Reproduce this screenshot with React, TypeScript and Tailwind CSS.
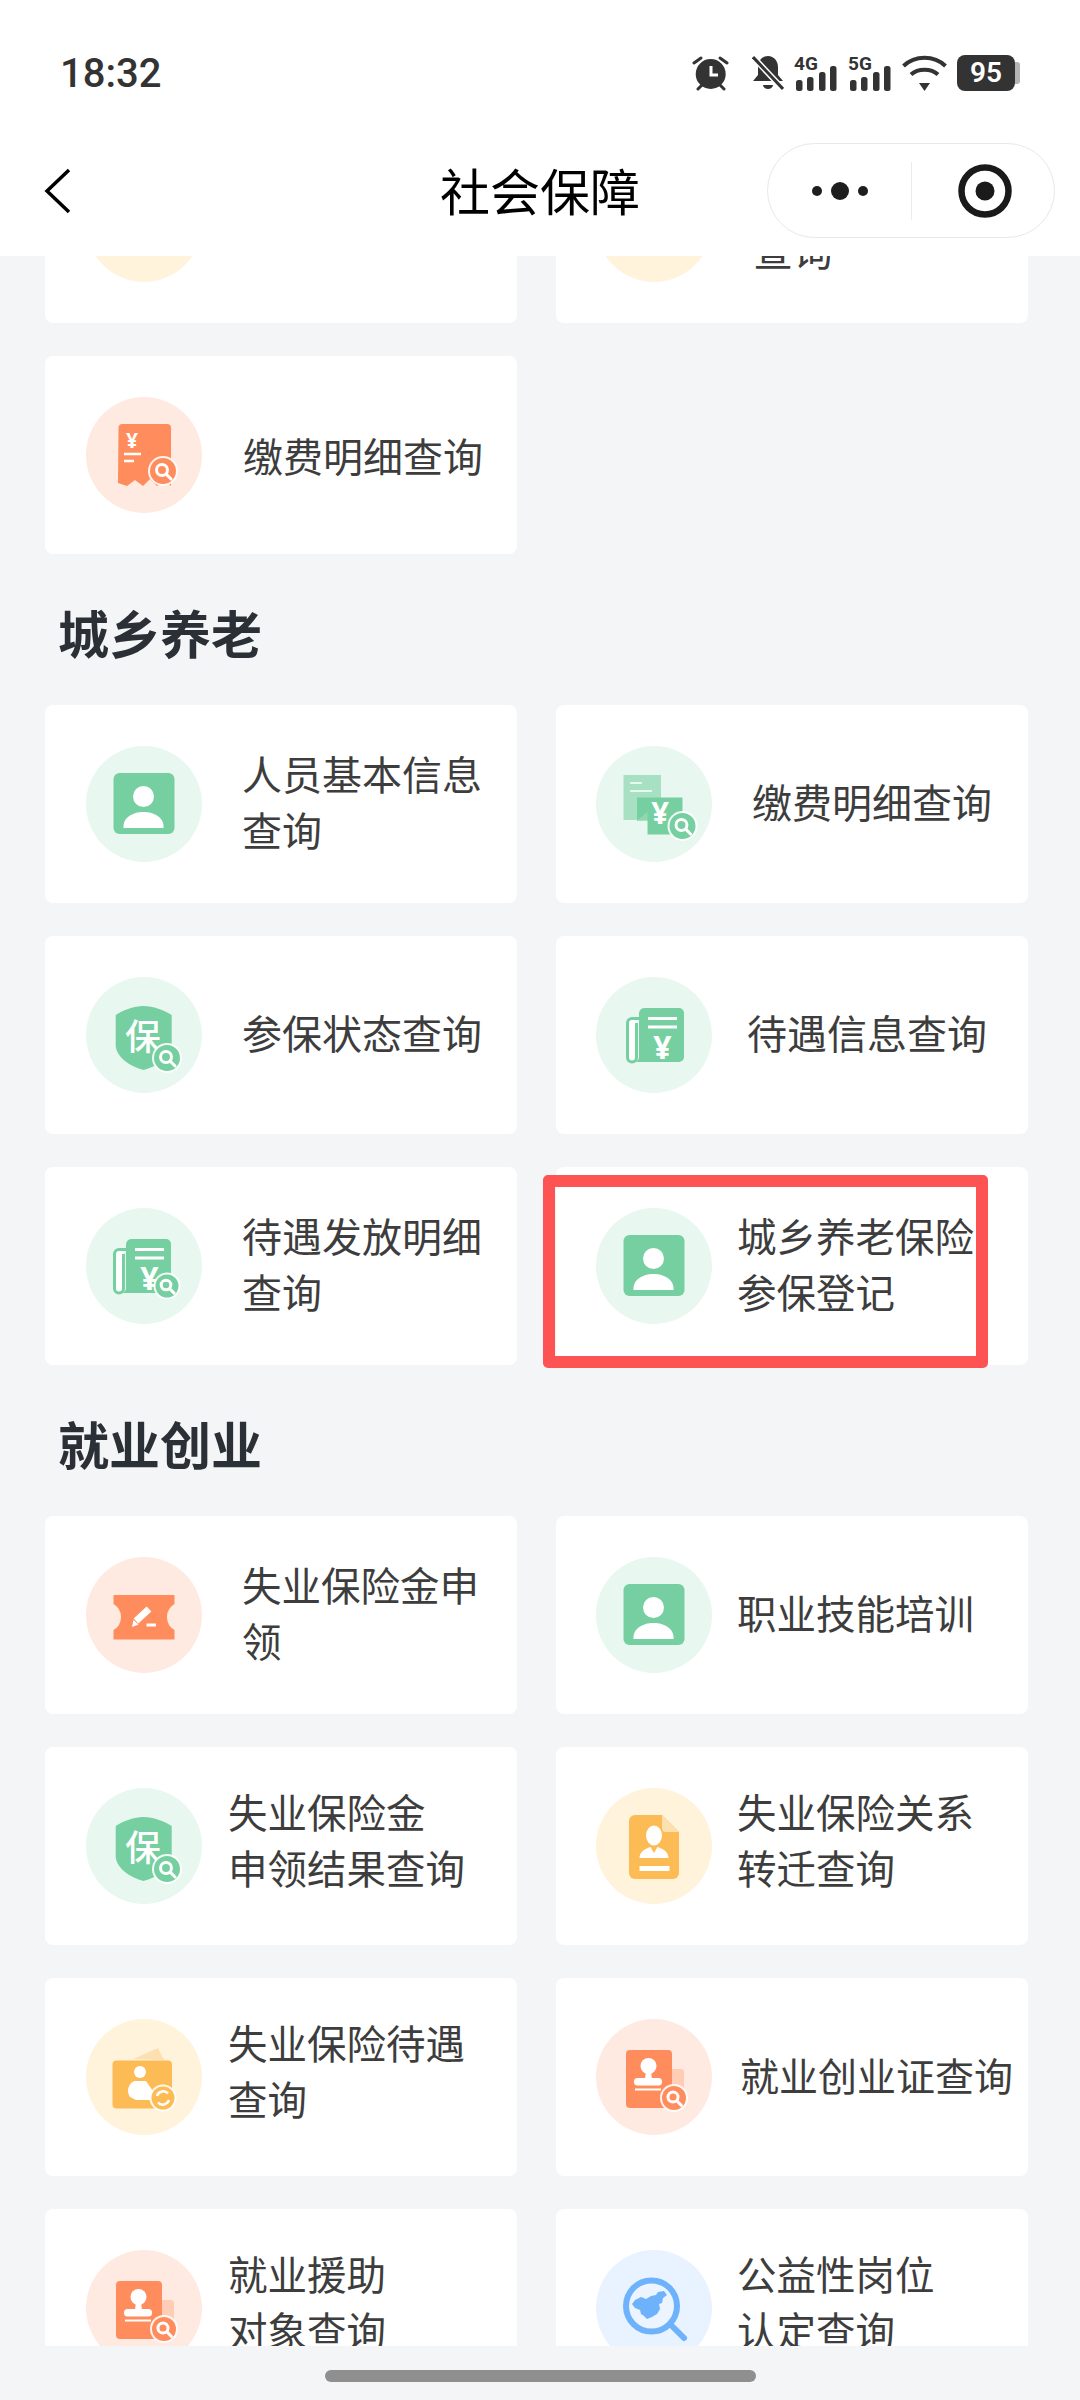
import React from 'react';

const GREEN = '#76cfa0';
const ORANGE = '#ff8c5c';
const YELLOW = '#fdbb55';
const BLUE = '#6db2fb';

const Glass = ({ x, y, fill, r = 13 }: { x: number; y: number; fill: string; r?: number }) => (
  <g>
    <circle cx={x} cy={y} r={r + 2} fill="#ffffff" opacity="0.9" />
    <circle cx={x} cy={y} r={r} fill={fill} />
    <circle cx={x - 1} cy={y - 1} r={r * 0.42} fill="none" stroke="#fff" strokeWidth="3" />
    <path d={`M${x + r * 0.3} ${y + r * 0.3}l${r * 0.32} ${r * 0.32}`} stroke="#fff" strokeWidth="3" strokeLinecap="round" />
  </g>
);

const Yen = ({ x, y, size = 28 }: { x: number; y: number; size?: number }) => (
  <text x={x} y={y} fontSize={size} fontWeight="700" fill="#fff" textAnchor="middle" dominantBaseline="central" fontFamily="Noto Sans, sans-serif">
    ¥
  </text>
);

const Person = () => (
  <g>
    <rect x="27.5" y="27" width="61" height="61" rx="6" fill={GREEN} />
    <circle cx="57.5" cy="50.5" r="10.5" fill="#fff" />
    <path d="M37.5 82c-1-10 9-16 20-16s21 6 20 16z" fill="#fff" />
  </g>
);

const Roll = () => (
  <g>
    <path d="M44 41.5h-8a4.5 4.5 0 0 0-4.5 4.5v34.5a4.5 4.5 0 0 0 9 0V46" fill="#fff" stroke={GREEN} strokeWidth="3" />
    <path d="M49 31h34a5 5 0 0 1 5 5v44a5 5 0 0 1-5 5H38a5 5 0 0 0 5-5V36a6 6 0 0 1 6-5z" fill={GREEN} />
    <path d="M52 41.5h29M52 50h29" stroke="#fff" strokeWidth="3" />
    <Yen x={66.5} y={69} size={32} />
  </g>
);

const Shield = () => (
  <g>
    <path d="M57.5 29C67 29 78 33 85.7 38V68C85.7 80 70 90 57.5 93C45 90 29.7 80 29.7 68V38C37 33 48 29 57.5 29z" fill={GREEN} />
    <text x="57" y="57" fontSize="36" fontWeight="500" fill="#fff" textAnchor="middle" dominantBaseline="central" fontFamily="Noto Sans CJK SC, sans-serif">
      保
    </text>
    <Glass x={81} y={81} fill={GREEN} />
  </g>
);

const Stamp = () => (
  <g>
    <rect x="70" y="50" width="18" height="34" rx="3" fill="#ffcdb5" />
    <rect x="30" y="31" width="46" height="58" rx="4" fill={ORANGE} />
    <circle cx="52.5" cy="47" r="8" fill="#fff" />
    <path d="M50 52h5l1 8h-7z" fill="#fff" />
    <rect x="38" y="59" width="28" height="7.5" rx="3.5" fill="#fff" />
    <path d="M39 70.5h26" stroke="#fff" strokeWidth="2" />
    <Glass x={78} y={79} fill={ORANGE} r={12} />
  </g>
);

const icons: Record<string, React.ReactNode> = {
  none: null,
  person: <Person />,
  bills: (
    <g>
      <path d="M27.5 29H65v24H41v21H27.5z" fill="#a8e0c3" />
      <path d="M34 37h12M34 45h22" stroke="#e6f7ee" strokeWidth="2" />
      <path d="M41 51.5h45.5v37h-35v-14H41z" fill={GREEN} />
      <path d="M41 74.5l10.500-0.500v-8z" fill="#8fd8b2" />
      <Yen x={64} y={66} size={31} />
      <Glass x={86.5} y={80} fill={GREEN} />
    </g>
  ),
  shield: <Shield />,
  roll: <Roll />,
  rollGlass: (
    <g>
      <g transform="translate(-3 0)">
        <Roll />
      </g>
      <Glass x={81} y={78} fill={GREEN} r={11.5} />
    </g>
  ),
  receipt: (
    <g>
      <path d="M32.500 31a4 4 0 0 1 4-4h44.500a4 4 0 0 1 4 4v58l-7-5-7 5-7-7-7 7-8-6-8 6-9-3z" fill={ORANGE} />
      <Yen x={46} y={43} size={21} />
      <path d="M38 57h17M38 64h10" stroke="#fff" strokeWidth="2.500" />
      <Glass x={77} y={74} fill={ORANGE} r={13} />
    </g>
  ),
  ticket: (
    <g>
      <path d="M27.500 38H88.500V47A15 15 0 0 0 88.500 73V82.500H27.500V73A15 15 0 0 0 27.500 47z" fill={ORANGE} />
      <path d="M50 64l13-12" stroke="#fff" strokeWidth="7" />
      <path d="M46 70l1.500-7 5 4.500z" fill="#fff" />
      <path d="M60.500 68h9.500" stroke="#fff" strokeWidth="3" />
    </g>
  ),
  doc: (
    <g>
      <path d="M39 27h27l17 17v41a6 6 0 0 1-6 6H39a6 6 0 0 1-6-6V33a6 6 0 0 1 6-6z" fill={YELLOW} />
      <path d="M66 27l17 17H70a4 4 0 0 1-4-4z" fill="#fde0b0" />
      <ellipse cx="58" cy="47.500" rx="8" ry="10" fill="#fff" />
      <path d="M43.500 70c0-6 5-9 11-11l3.500 6 3.500-6c6 2 11 5 11 11z" fill="#fff" />
      <path d="M43.500 80.500h30" stroke="#fff" strokeWidth="5" />
    </g>
  ),
  wallet: (
    <g>
      <path d="M47 40l25-11 6 12z" fill="#fde0b0" />
      <rect x="26.500" y="41.500" width="59.500" height="48" rx="4" fill={YELLOW} />
      <circle cx="54" cy="53" r="6" fill="#fff" />
      <path d="M48 62h12l9 13v6H50l-6-3c-4-6-2-12 4-16z" fill="#fff" />
      <circle cx="77" cy="79" r="13.500" fill="#fff" opacity="0.9" />
      <circle cx="77" cy="79" r="11.500" fill={YELLOW} />
      <path d="M71 77a6.500 6.500 0 0 1 11-2.500M83 81a6.500 6.500 0 0 1-11 2.500" fill="none" stroke="#fff" strokeWidth="2.500" />
    </g>
  ),
  stamp: <Stamp />,
  map: (
    <g>
      <circle cx="55.500" cy="56" r="25.500" fill="#fff" fillOpacity="0.15" stroke={BLUE} strokeWidth="6" />
      <path d="M77 77l11 11" stroke={BLUE} strokeWidth="6" strokeLinecap="round" />
      <path d="M39 50l6-3 5 2 5-3 5-1 2-3 6-1 3 4-4 3-1 5-3 1 1 5-3 5-5 3-5 2-3-3-3-2-1-4-5-2-3-4z" fill={BLUE} />
    </g>
  ),
};

interface Entry {
  lines: string[];
  icon: string;
  circle: string;
  text: string; // offset from the circle and font size, differs per card in the source
}

type Section = { title?: string; items: Entry[] };

const sections: Section[] = [
  {
    items: [
      { lines: [''], icon: 'none', circle: 'fill-[#fff3dc]', text: 'ml-10 text-[40px]' },
      { lines: ['', '查询'], icon: 'none', circle: 'fill-[#fff3dc]', text: 'ml-[41px] text-[40px]' },
      { lines: ['缴费明细查询'], icon: 'receipt', circle: 'fill-[#ffeae2]', text: 'ml-[41px] mt-[6px] text-[40px]' },
    ],
  },
  {
    title: '城乡养老',
    items: [
      { lines: ['人员基本信息', '查询'], icon: 'person', circle: 'fill-[#e8f8f0]', text: 'ml-10 text-[40px]' },
      { lines: ['缴费明细查询'], icon: 'bills', circle: 'fill-[#e8f8f0]', text: 'ml-10 text-[40px]' },
      { lines: ['参保状态查询'], icon: 'shield', circle: 'fill-[#e8f8f0]', text: 'ml-10 text-[40px]' },
      { lines: ['待遇信息查询'], icon: 'roll', circle: 'fill-[#e8f8f0]', text: 'ml-[35px] text-[40px]' },
      { lines: ['待遇发放明细', '查询'], icon: 'rollGlass', circle: 'fill-[#e8f8f0]', text: 'ml-10 text-[40px]' },
      { lines: ['城乡养老保险', '参保登记'], icon: 'person', circle: 'fill-[#e8f8f0]', text: 'ml-[25px] text-[39.5px]' },
    ],
  },
  {
    title: '就业创业',
    items: [
      { lines: ['失业保险金申', '领'], icon: 'ticket', circle: 'fill-[#ffeae2]', text: 'ml-10 text-[39.5px]' },
      { lines: ['职业技能培训'], icon: 'person', circle: 'fill-[#e8f8f0]', text: 'ml-[25px] text-[39.5px]' },
      { lines: ['失业保险金', '申领结果查询'], icon: 'shield', circle: 'fill-[#e8f8f0]', text: 'ml-[26px] mb-[8px] text-[39.5px]' },
      { lines: ['失业保险关系', '转迁查询'], icon: 'doc', circle: 'fill-[#fff3dc]', text: 'ml-[25px] mb-[8px] text-[39.5px]' },
      { lines: ['失业保险待遇', '查询'], icon: 'wallet', circle: 'fill-[#fff3dc]', text: 'ml-[26px] mb-[8px] text-[39.5px]' },
      { lines: ['就业创业证查询'], icon: 'stamp', circle: 'fill-[#ffeae2]', text: 'ml-[28px] text-[39px]' },
      { lines: ['就业援助', '对象查询'], icon: 'stamp', circle: 'fill-[#ffeae2]', text: 'ml-[26px] mb-[8px] text-[39.5px]' },
      { lines: ['公益性岗位', '认定查询'], icon: 'map', circle: 'fill-[#e8f3ff]', text: 'ml-[25px] mb-[8px] text-[39.5px]' },
    ],
  },
];

const Signal = ({ label }: { label: string }) => (
  <svg width="43" height="36" viewBox="0 0 43 36" className="overflow-visible">
    <text x="0" y="14.500" fontSize="19" fontWeight="700" fill="#333" fontFamily="Roboto, sans-serif">
      {label}
    </text>
    <rect x="2" y="25" width="6.500" height="11" rx="2.500" fill="#333" />
    <rect x="13" y="22" width="6.500" height="14" rx="2.500" fill="#333" />
    <rect x="25" y="17" width="6.500" height="19" rx="2.500" fill="#333" />
    <rect x="36" y="11" width="6.500" height="25" rx="2.500" fill="#333" />
  </svg>
);

const StatusBar = () => (
  <div className="h-[143px] flex items-start justify-between pt-[49px] pl-[60px] pr-[60px]">
    <span className="font-['Roboto',sans-serif] text-[40px] leading-[50px] font-medium text-[#333]">18:32</span>
    <div className="flex items-center h-[48px]">
      <svg width="38" height="36" viewBox="0 0 38 36" className="mr-[22px]">
        <circle cx="18.700" cy="19" r="15" fill="#333" />
        <path d="M19 11v9h7" fill="none" stroke="#fff" strokeWidth="3" />
        <path d="M2 8l7-5M35 8l-7-5M6 34l5-5M32 34l-5-5" stroke="#333" strokeWidth="3" strokeLinecap="round" />
      </svg>
      <svg width="32" height="36" viewBox="0 0 32 36" className="mr-[10px]">
        <path d="M16 1C10 1 6 6 6 12v8l-5 6h30l-5-6v-8C26 6 22 1 16 1z" fill="#333" />
        <path d="M11 30a5 4 0 0 0 10 0z" fill="#333" />
        <path d="M1 2l30 32" stroke="#fff" strokeWidth="6" />
        <path d="M1 2l30 32" stroke="#333" strokeWidth="3" />
      </svg>
      <div className="mr-[11px]"><Signal label="4G" /></div>
      <div className="mr-[11px]"><Signal label="5G" /></div>
      <svg width="45" height="36" viewBox="0 0 45 36" className="mr-[10px]">
        <path d="M1.500 11C13 0 32 0 43.500 11M9 19.500C16 13 29 13 36 19.500" fill="none" stroke="#333" strokeWidth="4" />
        <path d="M17 28h11l-5.500 8z" fill="#333" />
      </svg>
      <div className="flex items-center">
        <div className="w-[58px] h-[36px] rounded-[8px] bg-[#333] flex items-center justify-center text-white font-['Roboto',sans-serif] text-[28px] font-semibold leading-none">
          95
        </div>
        <div className="w-[5px] h-[22px] rounded-r-[3px] bg-[#b5b5b5]" />
      </div>
    </div>
  </div>
);

const NavBar = () => (
  <div className="h-[95px] grid grid-cols-[1fr_auto_1fr] items-center px-[25px]">
    <svg width="28" height="46" viewBox="0 0 28 46" className="ml-[19px]">
      <path d="M25 2L3 23l22 21" fill="none" stroke="#000" strokeWidth="3.500" />
    </svg>
    <h1 className="text-[50px] leading-none font-normal text-black pb-[4px]">社会保障</h1>
    <div className="justify-self-end w-[288px] h-[95px] rounded-full border border-[#e8e8e8] bg-white flex items-center">
      <div className="w-[143px] flex justify-center">
        <svg width="56" height="20" viewBox="0 0 56 20">
          <circle cx="5" cy="10" r="5" fill="#1e1e1e" />
          <circle cx="28" cy="10" r="9" fill="#1e1e1e" />
          <circle cx="51" cy="10" r="5" fill="#1e1e1e" />
        </svg>
      </div>
      <div className="w-px h-[58px] bg-[#ececec]" />
      <div className="flex-1 flex justify-center pl-[3px]">
        <svg width="54" height="54" viewBox="0 0 54 54">
          <circle cx="27" cy="27" r="23.500" fill="none" stroke="#1a1a1a" strokeWidth="6.500" />
          <circle cx="27" cy="27" r="9.500" fill="#1a1a1a" />
        </svg>
      </div>
    </div>
  </div>
);

const Card = ({ item, right, boxed }: { item: Entry; right: boolean; boxed: boolean }) => (
  <div className={`relative h-[198px] bg-white rounded-[8px] flex items-center ${right ? 'pl-10' : 'pl-[41px]'}`}>
    <svg width="116" height="116" viewBox="0 0 116 116" className="shrink-0">
      <circle cx="58" cy="58" r="58" className={item.circle} />
      {icons[item.icon]}
    </svg>
    <div className={`${item.text} pb-[6px] leading-[56px] text-[#3d3d3d] whitespace-nowrap`}>
      {item.lines.map((line, i) => (
        <div key={i} className="h-[56px]">{line}</div>
      ))}
    </div>
    {boxed && (
      <div className="absolute -left-[13px] top-[8px] w-[445px] h-[193px] border-[12.5px] border-[#fd5353] rounded-[5px]" />
    )}
  </div>
);

export default function App() {
  return (
    <div className="w-[1080px] h-[2400px] overflow-hidden flex flex-col bg-[#f4f5f7] font-['Noto_Sans_CJK_SC','Noto_Sans',sans-serif]">
      <header className="relative z-10 h-[256px] shrink-0 bg-white">
        <StatusBar />
        <NavBar />
      </header>

      <main className="h-[2090px] shrink-0 overflow-hidden">
        <div className="-mt-[131px] pl-[45px] pr-[52px]">
          {sections.map(section => (
            <section key={section.title ?? 'top'}>
              {section.title && (
                <h2 className="h-[151px] pt-[6px] pl-[13px] flex items-center text-[51px] font-bold text-[#2b2f36]">
                  {section.title}
                </h2>
              )}
              <div className="grid grid-cols-2 gap-x-[39px] gap-y-[33px]">
                {section.items.map((item, i) => (
                  <Card key={i} item={item} right={i % 2 === 1} boxed={item.lines[0] === '城乡养老保险'} />
                ))}
              </div>
            </section>
          ))}
        </div>
      </main>

      <div className="flex justify-center pt-[24px]">
        <div className="w-[431px] h-[12px] rounded-full bg-[#8f8f8f]" />
      </div>
    </div>
  );
}
